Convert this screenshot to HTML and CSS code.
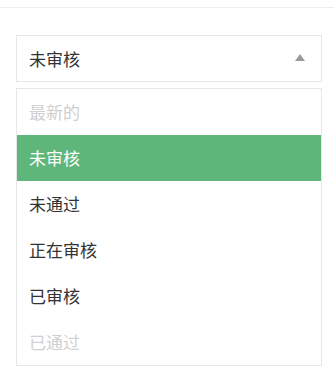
FILE: index.html
```html
<!DOCTYPE html>
<html lang="zh">
<head>
  <meta charset="UTF-8" />
  <meta name="viewport" content="width=device-width, initial-scale=1.0"/>
  <title>审核状态</title>
  <link rel="stylesheet" href="styles.css">
</head>
<body>

  <div class="topbar"></div>

  <section class="filter">
    <div class="select-box">
      <span class="current">未审核</span>
      <span class="arrow"></span>
    </div>

    <ul class="options">
      <li class="disabled">最新的</li>
      <li class="active">未审核</li>
      <li>未通过</li>
      <li>正在审核</li>
      <li>已审核</li>
      <li class="disabled">已通过</li>
    </ul>
  </section>

</body>
</html>
```

FILE: styles.css
```css
body {
  margin: 0;
  font-family: "Noto Sans CJK SC", "Noto Sans", sans-serif;
  background-color: #fff;
  color: #333;
}

.topbar {
  height: 7px;
  border-bottom: 1px solid #ededed;
}

.filter {
  padding: 27px 12px 0 16px;
}

.select-box {
  display: flex;
  justify-content: space-between;
  align-items: center;
  height: 45px;
  padding: 0 14px 0 12px;
  border: 1px solid #e6e6e6;
}

.current {
  font-size: 17px;
}

.arrow {
  width: 0;
  height: 0;
  border-left: 5px solid transparent;
  border-right: 5px solid transparent;
  border-bottom: 7px solid #999;
  margin-right: 2px;
  margin-bottom: 2px;
}

.options {
  list-style: none;
  margin: 6px 0 0;
  padding: 0;
  border: 1px solid #e6e6e6;
}

.options li {
  height: 46px;
  line-height: 46px;
  padding: 0 12px;
  font-size: 17px;
}

.options li.disabled {
  color: #d0d0d0;
}

.options li.active {
  background-color: #5fb67a;
  color: #fff;
}
```
